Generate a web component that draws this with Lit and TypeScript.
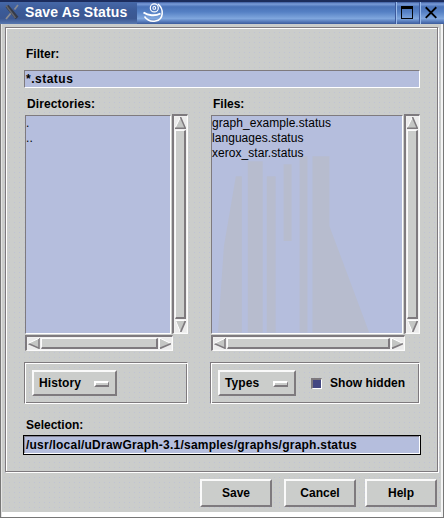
import { LitElement, html, css, svg } from "lit";
import { customElement, property } from "lit/decorators.js";

@customElement("motif-scroll")
class MotifScroll extends LitElement {
  @property({ type: Boolean, reflect: true }) horizontal = false;

  static styles = css`
    :host {
      display: flex;
      flex-direction: column;
      box-sizing: border-box;
      width: 16px;
      height: 220px;
      padding: 1px 1px 1px 1px;
      border: 1px solid;
      border-width: 2px 1px 1px 2px;
      border-color: #7e7a7e #fbfbfb #fbfbfb #7e7a7e;
      background: #f0f0f0;
    }
    :host([horizontal]) {
      flex-direction: row;
      width: auto;
      height: 16px;
    }
    svg {
      display: block;
      flex: none;
      width: 11px;
      height: 12px;
      background: #ececec;
    }
    :host([horizontal]) svg {
      width: 12px;
      height: 11px;
    }
    .thumb {
      flex: 1;
      margin: 1px 0;
      border: 1px solid;
      border-width: 1px 2px 2px 1px;
      border-color: #fbfbfb #7e7a7e #7e7a7e #fbfbfb;
      background: #cbcdcb;
    }
    :host([horizontal]) .thumb {
      margin: 0 1px;
    }
  `;

  render() {
    if (this.horizontal) {
      return html`
        <svg viewBox="0 0 12 11">${svg`
          <path d="M11.5 0V11L0 5.5Z" fill="#c4c6c4" />
          <path d="M0 5.5L11 10.2V0" fill="none" stroke="#7e7a7e" stroke-width="1.5" />
          <path d="M0 5.5L11 .3" stroke="#fff" />`}</svg>
        <div class="thumb"></div>
        <svg viewBox="0 0 12 11">${svg`
          <path d="M.5 0V11L12 5.5Z" fill="#c4c6c4" />
          <path d="M.5 11V0L12 5.5" fill="none" stroke="#fff" />
          <path d="M1 10.4L12 5.7" stroke="#7e7a7e" stroke-width="1.7" />`}</svg>
      `;
    }
    return html`
      <svg viewBox="0 0 11 12">${svg`
        <path d="M0 11.5H11L5.5 0Z" fill="#c4c6c4" />
        <path d="M0 11L5.5 0" stroke="#fff" />
        <path d="M5.5 0L10.3 11.2H0" fill="none" stroke="#7e7a7e" stroke-width="1.5" />`}</svg>
      <div class="thumb"></div>
      <svg viewBox="0 0 11 12">${svg`
        <path d="M0 .5H11L5.5 12Z" fill="#c4c6c4" />
        <path d="M5.3 12L.5 .5H11" fill="none" stroke="#fff" />
        <path d="M5.7 12L10.4 1" stroke="#7e7a7e" stroke-width="1.7" />`}</svg>
    `;
  }
}

@customElement("app-root")
class AppRoot extends LitElement {
  static styles = css`
    :host {
      display: block;
      width: 444px;
      height: 518px;
      overflow: hidden;
      font: bold 12px/15px "Liberation Sans", Arial, sans-serif;
      color: #000;
    }
    * {
      box-sizing: border-box;
    }
    .window {
      display: flex;
      flex-direction: column;
      height: 518px;
      background: #cbcdcb;
    }
    .title {
      display: flex;
      flex: none;
      height: 24px;
      border-top: 2px solid #1c2c5c;
      background: linear-gradient(#3b5a9d, #7a9cd8 9%, #4a72b8 22%, #5580c4 45%, #7fa6dd 75%, #5478b8 90%, #3c5c9c);
    }
    .caption {
      display: flex;
      width: 137px;
      color: #fff;
      font-size: 14px;
      line-height: 21px;
      background: linear-gradient(#4668a8, #3b5a97 40%, #3b5791 75%, #5878b0);
    }
    .caption svg {
      flex: none;
      width: 16px;
      height: 16px;
      margin: 2px 5px 0 4px;
    }
    .caption span {
      white-space: nowrap;
      letter-spacing: 0.12px;
    }
    .swirl {
      width: 24px;
      height: 22px;
      margin-left: 4px;
    }
    .tools {
      display: flex;
      margin-left: auto;
      padding-right: 1px;
    }
    .tools svg {
      width: 24px;
      height: 22px;
      border-left: 1px solid #3d599b;
      box-shadow: inset 1px 0 #9bbcec;
    }
    .body {
      display: flex;
      flex: 1;
      flex-direction: column;
      border: solid;
      border-width: 0 1px 1px 1px;
      border-color: #777;
      box-shadow: inset 1px 0 #e4e4e4, inset -2px 0 #f4f4f4, inset 0 -5px #fff;
      padding: 3px 5px 0 4px;
      background: radial-gradient(circle, #bfc2d6 0.5px, transparent 0.8px) 1px 1px / 5px 5px;
    }
    .frame {
      height: 445px;
      border: 1px solid #7e7a7e;
      box-shadow: inset 1px 1px #fff, 1px 1px #fff;
      padding: 19px 16px 0 17px;
      margin: 0 0 1px;
    }
    .label {
      display: block;
      height: 15px;
      padding-left: 3px;
      white-space: nowrap;
    }
    .field {
      height: 18px;
      width: 396px;
      margin: 8px 0 0 1px;
      border: 1px solid;
      border-color: #7e7a7e #fff #fff #7e7a7e;
      padding-left: 1px;
      line-height: 17px;
      letter-spacing: 0.5px;
      background: #b5bedd;
    }
    .columns {
      display: flex;
      width: 397px;
      margin-top: 8px;
      padding-left: 1px;
      justify-content: space-between;
    }
    .left {
      width: 164px;
    }
    .right {
      width: 210px;
    }
    .label.head {
      height: 18px;
      line-height: 16px;
    }
    .left .head {
      letter-spacing: 0.12px;
    }
    .pair {
      display: flex;
      justify-content: flex-end;
    }
    .list {
      flex: 1;
      height: 219px;
      margin: 1px 1px 0 1px;
      border: 1px solid;
      border-color: #7e7a7e #fff #fff #7e7a7e;
      font-weight: normal;
      line-height: 15px;
      background: #b5bedd;
    }
    .list.graph {
      position: relative;
    }
    .list span {
      display: block;
      position: relative;
      letter-spacing: 0.05px;
    }
    .ghost {
      position: absolute;
      inset: 0;
      width: 100%;
      height: 100%;
    }
    .across {
      margin: 1px 15px 0 1px;
    }
    .box {
      display: flex;
      align-items: center;
      height: 42px;
      margin-top: 11px;
      border: 1px solid;
      border-color: #7e7a7e #fff #fff #7e7a7e;
      box-shadow: inset 1px 1px #fff, inset -1px -1px #7e7a7e;
      padding-left: 7px;
    }
    .button {
      display: flex;
      align-items: center;
      justify-content: center;
      border: 2px solid;
      border-color: #fafafa #7e7a7e #7e7a7e #fafafa;
      background: #cbcdcb;
    }
    .option {
      width: 85px;
      height: 26px;
      justify-content: space-between;
      padding: 0 6px 0 5px;
      letter-spacing: 0.1px;
    }
    .option i {
      width: 15px;
      height: 6px;
      margin-top: 1px;
      border: 1px solid;
      border-width: 2px 1px 2px 2px;
      border-color: #fff #7e7a7e #7e7a7e #fff;
    }
    .types {
      width: 78px;
    }
    .check {
      width: 11px;
      height: 11px;
      margin: 1px 8px 0 15px;
      border: 2px solid;
      border-width: 2px 1px 1px 2px;
      border-color: #7e7a7e #fff #fff #7e7a7e;
      background: #434782;
    }
    .hidden {
      letter-spacing: 0.05px;
      white-space: nowrap;
    }
    .label.selection {
      margin-top: 14px;
    }
    .field.path {
      width: 398px;
      height: 20px;
      margin: 2px 0 0 0;
      border: 1px solid #000;
      box-shadow: inset -1px -1px #fff, inset 1px 1px #858494;
      padding-left: 2px;
      line-height: 18px;
      white-space: nowrap;
      letter-spacing: 0.23px;
    }
    .actions {
      display: flex;
      justify-content: flex-end;
      padding: 6px 1px 0 0;
    }
    .actions .button {
      width: 72px;
      height: 28px;
      margin-left: 12px;
    }
    .actions .button:last-child {
      margin-left: 9px;
    }
  `;

  render() {
    return html`
      <div class="window">
        <div class="title">
          <div class="caption">
            <svg viewBox="0 0 16 16">
              <path d="M14 1L10.5 5.5M7 9L2 15" stroke="#8a8b91" stroke-width="1.8" />
              <path d="M3 2L13 14" stroke="#353a48" stroke-width="3.6" />
              <path d="M2 1.5L11.5 14" stroke="#62646c" stroke-width="1.5" />
            </svg>
            <span>Save As Status</span>
          </div>
          <svg class="swirl" viewBox="0 0 24 22" fill="none" stroke="#fff">
            <circle cx="13.3" cy="5.9" r="4" stroke-width="1.2" />
            <circle cx="13.3" cy="5.9" r="1.4" stroke-width="1.1" />
            <path d="M2.5 10.5C7 13.5 14 14.5 19.5 11.5" stroke-width="1.9" />
            <path d="M17 2C23 7 23 17.5 14.5 19C9.500 20 6 18 3.500 14.5" stroke-width="1.5" />
          </svg>
          <div class="tools">
            <svg viewBox="0 0 24 22" shape-rendering="crispEdges">
              <rect x="5.5" y="4.5" width="12" height="12" fill="none" stroke="#000" />
              <rect x="5" y="4" width="13" height="3" />
            </svg>
            <svg viewBox="0 0 24 22">
              <path d="M6 5L17 16M17 5L6 16" stroke="#000" stroke-width="1.9" />
            </svg>
          </div>
        </div>
        <div class="body">
          <div class="frame">
            <span class="label">Filter:</span>
            <div class="field">*.status</div>
            <div class="columns">
              <div class="left">
                <span class="label head">Directories:</span>
                <div class="pair">
                  <div class="list"><span>.</span><span>..</span></div>
                  <motif-scroll></motif-scroll>
                </div>
                <motif-scroll class="across" horizontal></motif-scroll>
                <div class="box">
                  <div class="button option">History<i></i></div>
                </div>
              </div>
              <div class="right">
                <span class="label head">Files:</span>
                <div class="pair">
                  <div class="list graph">
                    <svg class="ghost" viewBox="0 0 191 217" fill="#b7bcce">
                      <path d="M12 130L24 60H30V217H6ZM36 45H51V217H36ZM55 60H64V217H55ZM72 48H80V125H72ZM88 40H96V217H88ZM101 40H118V110L158 217H101Z" />
                    </svg>
                    <span>graph_example.status</span>
                    <span>languages.status</span>
                    <span>xerox_star.status</span>
                  </div>
                  <motif-scroll></motif-scroll>
                </div>
                <motif-scroll class="across" horizontal></motif-scroll>
                <div class="box">
                  <div class="button option types">Types<i></i></div>
                  <div class="check"></div>
                  <span class="hidden">Show hidden</span>
                </div>
              </div>
            </div>
            <span class="label selection">Selection:</span>
            <div class="field path">/usr/local/uDrawGraph-3.1/samples/graphs/graph.status</div>
          </div>
          <div class="actions">
            <div class="button">Save</div>
            <div class="button">Cancel</div>
            <div class="button">Help</div>
          </div>
        </div>
      </div>
    `;
  }
}
